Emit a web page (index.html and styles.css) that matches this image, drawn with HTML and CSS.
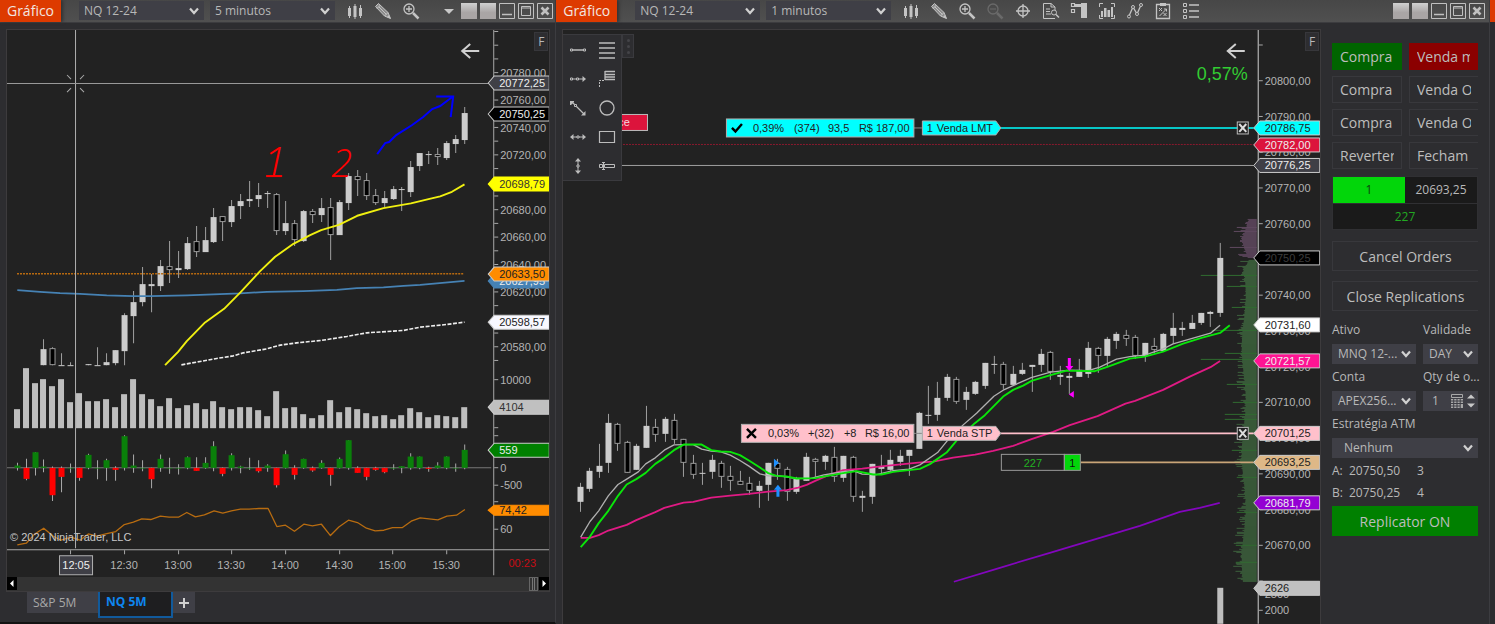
FILE: index.html
```html
<!DOCTYPE html>
<html lang="pt-BR">
<head>
<meta charset="utf-8">
<title>Gráfico NQ 12-24</title>
<link rel="stylesheet" href="styles.css">
</head>
<body>
<svg class="defs" aria-hidden="true">
  <symbol id="chev" viewBox="0 0 10 8"><path d="M1 1.500L5 6L9 1.500" fill="none" stroke="currentColor" stroke-width="2.200"/></symbol>
  <symbol id="bars" viewBox="0 0 18 18"><path d="M3.500 4v12M9 2v15M14.500 3v13" stroke="currentColor" fill="none"/><path d="M2 6h3v8H2zM7.500 4h3v11h-3zM13 6h3v8h-3z" fill="currentColor"/></symbol>
  <symbol id="pencil" viewBox="0 0 18 18"><path d="M1.500 4.500L4.500 1.500L14 10.500L16.500 16.500L10.500 14z" fill="#8c8c8c" stroke="currentColor"/><path d="M3 6.500L6.500 3M5 5l7.500 7.500M10.500 14l3.500-3.500" stroke="currentColor" fill="none"/><path d="M13 15l2-2 1.500 3.500z" fill="currentColor"/></symbol>
  <symbol id="zoomin" viewBox="0 0 18 18"><circle cx="7" cy="7" r="5" fill="none" stroke="currentColor" stroke-width="1.300"/><path d="M4 7h6M7 4v6" stroke="currentColor" stroke-width="1.300"/><path d="M11 11l5.500 5.500" stroke="currentColor" stroke-width="2.500"/></symbol>
  <symbol id="zoomout" viewBox="0 0 18 18"><circle cx="7" cy="7" r="5" fill="none" stroke="currentColor" stroke-width="1.300"/><path d="M4 7h6" stroke="currentColor"/><path d="M11 11l5.500 5.500" stroke="currentColor" stroke-width="2.500"/></symbol>
  <symbol id="target" viewBox="0 0 18 18"><circle cx="9" cy="9" r="5" fill="none" stroke="currentColor" stroke-width="1.300"/><path d="M2 9h14M9 2v14" stroke="currentColor" stroke-width="1.300"/></symbol>
  <symbol id="docsearch" viewBox="0 0 18 18"><path d="M13 16.500H1.500v-15H9L13 5v3M9 1.500V5h4" fill="none" stroke="currentColor"/><path d="M4 7h4M4 9.500h4M4 12h5" stroke="currentColor"/><circle cx="12" cy="10.500" r="2.500" fill="none" stroke="currentColor"/><path d="M14 12.500l3 3" stroke="currentColor" stroke-width="1.500"/></symbol>
  <symbol id="trader" viewBox="0 0 18 18"><path d="M11 1h6v15h-6z" fill="currentColor"/><path d="M1.500 1.500h3v3h-3zM1.500 7.500h3v3h-3zM5 3h6" fill="none" stroke="currentColor" stroke-width="1.200"/><path d="M5 2h6v3H5z" fill="currentColor"/></symbol>
  <symbol id="data" viewBox="0 0 18 18"><path d="M1.500 5V1.500H5M13 1.500h3.500V5M16.500 13v3.500H13M5 16.500H1.500V13" fill="none" stroke="currentColor"/><path d="M3 9h2v6H3zM6 6h2.500v9H6zM9.500 8H12v7H9.500zM13 5h2v10h-2z" fill="currentColor"/></symbol>
  <symbol id="nodes" viewBox="0 0 18 18"><path d="M3 14L7 5L11 12L15 3" fill="none" stroke="currentColor" stroke-width="1.300"/><g fill="#4a4a4a" stroke="currentColor"><circle cx="3" cy="14.500" r="1.500"/><circle cx="7" cy="5" r="1.500"/><circle cx="11" cy="12" r="1.500"/><circle cx="15" cy="3" r="1.500"/></g></symbol>
  <symbol id="clip" viewBox="0 0 18 18"><path d="M2.500 2.500h13v14h-13z" fill="none" stroke="currentColor" stroke-width="1.300"/><path d="M6 1h6v3H6z" fill="currentColor"/><path d="M5 6l3 3M8 6L5 9M9.500 11l3 3M12.500 11l-3 3M5.500 14l7-7M10 7h2.500v2.500" fill="none" stroke="currentColor"/></symbol>
  <symbol id="list" viewBox="0 0 18 18"><path d="M1.500 1.500h3v3h-3zM1.500 7.500h3v3h-3zM1.500 13.500h3v3h-3z" fill="none" stroke="currentColor"/><path d="M7 3h10M7 9h10M7 15h10" stroke="currentColor" stroke-width="1.300"/></symbol>
  <symbol id="win-min" viewBox="0 0 16 16"><path d="M.5.5h15v15H.5z" fill="none" stroke="currentColor"/><path d="M3 11.500h10" stroke="currentColor" stroke-width="1.500"/></symbol>
  <symbol id="win-max" viewBox="0 0 16 16"><path d="M.5.5h15v15H.5zM3.500 3.500h9v9h-9zM3.500 5h9" fill="none" stroke="currentColor"/></symbol>
  <symbol id="win-close" viewBox="0 0 16 16"><path d="M.5.5h15v15H.5z" fill="none" stroke="currentColor"/><path d="M4.500 4.500l7 7M11.500 4.500l-7 7" stroke="currentColor" stroke-width="2.600"/></symbol>
</svg>

<main class="desk">
  <section class="win win-left">
    <header class="bar">
      <h1 class="title">Gráfico</h1>
      <div class="picks">
        <label class="pick"><select aria-label="Instrumento"><option>NQ 12-24</option></select><svg><use href="#chev"/></svg></label>
        <label class="pick"><select aria-label="Intervalo"><option>5 minutos</option></select><svg><use href="#chev"/></svg></label>
      </div>
      <nav class="tools">
        <button aria-label="Estilo"><svg><use href="#bars"/></svg></button>
        <button aria-label="Desenho"><svg><use href="#pencil"/></svg></button>
        <button aria-label="Ampliar"><svg><use href="#zoomin"/></svg></button>
      </nav>
      <div class="wctl">
        <button class="caret" aria-label="Mais"></button>
        <button class="swatch" aria-label="Vínculo de instrumento"></button>
        <button class="swatch" aria-label="Vínculo de intervalo"></button>
        <button aria-label="Minimizar"><svg><use href="#win-min"/></svg></button>
        <button aria-label="Maximizar"><svg><use href="#win-max"/></svg></button>
        <button aria-label="Fechar"><svg><use href="#win-close"/></svg></button>
      </div>
    </header>
    <div class="frame">
      <svg id="chart5" class="chart" viewBox="7 30 542 547" role="img" aria-label="NQ 12-24, 5 minutos"></svg>
      <button class="fix">F</button>
      <div class="scroll">
        <button aria-label="Rolar para a esquerda"><svg viewBox="0 0 10 13"><path d="M6.500 3v7L3 6.500z" fill="#fff"/></svg></button>
        <span class="thumb"></span>
        <button aria-label="Rolar para a direita"><svg viewBox="0 0 10 13"><path d="M3.500 3v7L7 6.500z" fill="#fff"/></svg></button>
      </div>
    </div>
    <nav class="tabs">
      <button class="tab">S&amp;P 5M</button>
      <button class="tab on">NQ 5M</button>
      <button class="tab plus" aria-label="Nova aba"><svg viewBox="0 0 12 12"><path d="M6 1v10M1 6h10" stroke="#d0d0d0" stroke-width="2"/></svg></button>
    </nav>
  </section>

  <section class="win win-right">
    <header class="bar">
      <h1 class="title">Gráfico</h1>
      <div class="picks">
        <label class="pick"><select aria-label="Instrumento"><option>NQ 12-24</option></select><svg><use href="#chev"/></svg></label>
        <label class="pick"><select aria-label="Intervalo"><option>1 minutos</option></select><svg><use href="#chev"/></svg></label>
      </div>
      <nav class="tools">
        <button aria-label="Estilo"><svg><use href="#bars"/></svg></button>
        <button aria-label="Desenho"><svg><use href="#pencil"/></svg></button>
        <button aria-label="Ampliar"><svg><use href="#zoomin"/></svg></button>
        <button aria-label="Reduzir" disabled><svg><use href="#zoomout"/></svg></button>
        <button aria-label="Cursor"><svg><use href="#target"/></svg></button>
        <button aria-label="Caixa de dados"><svg><use href="#docsearch"/></svg></button>
        <button aria-label="Chart Trader"><svg><use href="#trader"/></svg></button>
        <button aria-label="Séries de dados"><svg><use href="#data"/></svg></button>
        <button aria-label="Indicadores"><svg><use href="#nodes"/></svg></button>
        <button aria-label="Estratégias"><svg><use href="#clip"/></svg></button>
        <button aria-label="Propriedades"><svg><use href="#list"/></svg></button>
      </nav>
      <div class="wctl">
        <button class="swatch" aria-label="Vínculo de instrumento"></button>
        <button class="swatch" aria-label="Vínculo de intervalo"></button>
        <button aria-label="Minimizar"><svg><use href="#win-min"/></svg></button>
        <button aria-label="Maximizar"><svg><use href="#win-max"/></svg></button>
        <button aria-label="Fechar"><svg><use href="#win-close"/></svg></button>
      </div>
    </header>
    <div class="body">
      <div class="frame">
        <svg id="chart1" class="chart" viewBox="563 30 757 594" role="img" aria-label="NQ 12-24, 1 minutos"></svg>
        <button class="fix">F</button>
        <div class="palette">
          <div class="palette-grid">
            <button aria-label="Linha"><svg viewBox="0 0 18 18"><path d="M3 9h12" stroke="currentColor" stroke-width="1.500"/><path d="M1.500 8h2v2h-2zM14.500 8h2v2h-2z" fill="none" stroke="currentColor"/></svg></button>
            <button aria-label="Níveis"><svg viewBox="0 0 18 18"><path d="M1 2h16M1 7h16M1 12h16M1 17h16" stroke="currentColor" stroke-width="1.300"/></svg></button>
            <button aria-label="Raio"><svg viewBox="0 0 18 18"><path d="M3 9h13" stroke="currentColor"/><path d="M1.500 8h2v2h-2zM7.500 8h2v2h-2z" fill="#2d2d30" stroke="currentColor"/><path d="M13.500 6l3.500 3-3.500 3z" fill="currentColor"/></svg></button>
            <button aria-label="Extensão"><svg viewBox="0 0 18 18"><path d="M7 1v9M7 1.500h10M7 4.500h10M7 7h10M7 9.500h10" stroke="currentColor" stroke-width="1.300"/><path d="M6 10.500H1.500V17" fill="none" stroke="currentColor" stroke-dasharray="2 1"/></svg></button>
            <button aria-label="Linha de seta"><svg viewBox="0 0 18 18"><path d="M3 3l12 12" stroke="currentColor" stroke-width="1.300"/><path d="M1 2h4v1L2 6H1zM16.500 12v4.500H12z" fill="currentColor"/><path d="M5.500 5.500h2v2h-2z" fill="#2d2d30" stroke="currentColor"/></svg></button>
            <button aria-label="Elipse"><svg viewBox="0 0 18 18"><circle cx="9" cy="9" r="7" fill="none" stroke="currentColor" stroke-width="1.300"/></svg></button>
            <button aria-label="Linha horizontal"><svg viewBox="0 0 18 18"><path d="M2 9h14" stroke="currentColor"/><path d="M4.500 6L1 9l3.500 3zM13.500 6L17 9l-3.500 3z" fill="currentColor"/><path d="M8 8h2v2H8z" fill="#2d2d30" stroke="currentColor"/></svg></button>
            <button aria-label="Retângulo"><svg viewBox="0 0 18 18"><path d="M1.500 3.500h15v11h-15z" fill="none" stroke="currentColor" stroke-width="1.200"/></svg></button>
            <button aria-label="Linha vertical"><svg viewBox="0 0 18 18"><path d="M9 2v14" stroke="currentColor"/><path d="M6 4.500L9 1l3 3.500zM6 13.500L9 17l3-3.500z" fill="currentColor"/><path d="M8 8h2v2H8z" fill="#2d2d30" stroke="currentColor"/></svg></button>
            <button aria-label="Régua"><svg viewBox="0 0 18 18"><path d="M1.500 7.500h3v3h-3zM6.500 7.500h10v3h-10z" fill="none" stroke="currentColor"/><path d="M4 5.500h3M5.500 5.500v7M4 12.500h3" stroke="currentColor" fill="none"/></svg></button>
          </div>
          <span class="grip"><i></i><i></i><i></i></span>
        </div>
      </div>

      <aside class="trader">
        <div class="orders">
          <button class="btn buy"><span>Compra</span></button><button class="btn sell"><span>Venda m</span></button>
          <button class="btn"><span>Compra</span></button><button class="btn cut"><span>Venda O</span></button>
          <button class="btn"><span>Compra</span></button><button class="btn cut"><span>Venda O</span></button>
          <button class="btn"><span>Reverter</span></button><button class="btn cut"><span>Fecham</span></button>
        </div>
        <div class="position">
          <output class="qty">1</output><output class="avg">20693,25</output>
          <output class="pnl">227</output>
        </div>
        <div class="wide">
          <button class="btn big cut">Cancel Orders</button>
          <button class="btn big cut">Close Replications</button>
        </div>
        <form class="fields">
          <div class="field"><label for="ativo">Ativo</label>
            <span class="pick"><select id="ativo"><option>MNQ 12-...</option></select><svg><use href="#chev"/></svg></span></div>
          <div class="field"><label for="validade">Validade</label>
            <span class="pick"><select id="validade"><option>DAY</option></select><svg><use href="#chev"/></svg></span></div>
          <div class="field"><label for="conta">Conta</label>
            <span class="pick"><select id="conta"><option>APEX256...</option></select><svg><use href="#chev"/></svg></span></div>
          <div class="field"><label for="qty">Qty de o...</label>
            <span class="stepper"><input id="qty" type="text" value="1">
              <svg class="calc" viewBox="0 0 12 14"><path d="M.5.5h11v3H.5z" fill="none" stroke="currentColor"/><path d="M0 5h2.200v1.500H0zM3.200 5h2.300v1.500H3.200zM6.500 5h2.200v1.500H6.500zM9.700 5H12v1.500H9.700zM0 7.500h2.200V9H0zM3.200 7.500h2.300V9H3.200zM6.500 7.500h2.200V9H6.500zM9.700 7.500H12V9H9.700zM0 10h2.200v1.500H0zM3.200 10h2.300v1.500H3.200zM6.500 10h2.200v1.500H6.500zM9.700 10H12v4H9.700zM0 12.500h2.200V14H0zM3.200 12.500h2.300V14H3.200zM6.500 12.500h2.200V14H6.500z" fill="currentColor"/></svg>
              <svg class="spin" viewBox="0 0 8 14"><path d="M0 4.500L4 .5l4 4zM0 9.500l4 4 4-4z" fill="currentColor"/></svg></span></div>
          <div class="field full"><label for="atm">Estratégia ATM</label>
            <span class="pick indent"><select id="atm"><option>Nenhum</option></select><svg><use href="#chev"/></svg></span></div>
        </form>
        <dl class="quotes">
          <dt>A:</dt><dd>20750,50</dd><dd>3</dd>
          <dt>B:</dt><dd>20750,25</dd><dd>4</dd>
        </dl>
        <button class="btn big on">Replicator ON</button>
      </aside>
    </div>
  </section>
  <div class="next"></div>
</main>
<script src="charts.js"></script>
</body>
</html>
```
FILE: styles.css
```css
* { box-sizing: border-box; }
body { margin: 0; background: #2d2d30; color: #b8b8b8; font: 12px/16px "Open Sans", "Noto Sans", sans-serif; }
button, select, input { font: inherit; color: inherit; margin: 0; padding: 0; border: 0; border-radius: 0; background: none; }
.defs { position: absolute; width: 0; height: 0; }
.desk { display: flex; min-height: 100vh; align-items: stretch; }
.win { border-right: 1px solid #3c3c40; min-width: 0; background: #2d2d30; }
.win-left { flex: 556 1 0; border-bottom: 2px solid #121212; }
.win-right { flex: 934 1 0; }
.next { width: 5px; border-top: 22px solid #dc3c04; }

.bar { display: flex; align-items: center; height: 23px; background: linear-gradient(#474747, #505050); border-bottom: 1px solid #3c3c3f; }
.title { margin: 0; height: 22px; background: #dd3a00; color: #f2e6e0; font-size: 14px; line-height: 22px; font-weight: 400; width: 61px; box-shadow: 2px 0 3px #333; text-align: center; }
.picks { display: flex; gap: 6px; margin-left: 18px; }
.picks .pick { width: 125px; }
.pick { display: grid; height: 20px; background: #3f3f46; align-items: center; }
.pick select, .pick svg { grid-area: 1 / 1; }
.pick select { appearance: none; width: 100%; height: 20px; padding: 0 18px 0 6px; overflow: hidden; }
.pick svg { justify-self: end; width: 10px; height: 8px; margin-right: 5px; color: #d0d0d0; pointer-events: none; }
.picks .pick { height: 19px; margin-bottom: 1px; }
.picks select { height: 19px; padding-left: 5px; }
.tools { display: flex; gap: 10px; margin-left: 11px; margin-bottom: 1px; color: #c4c4c4; }
.tools button, .tools svg { display: block; width: 18px; height: 18px; }
.tools button:disabled { color: #6a6a6a; }
.wctl { display: flex; align-items: center; gap: 3px; margin-left: auto; padding-right: 3px; color: #c0c0c0; }
.win-left .wctl { padding-right: 2px; }
.win-right .wctl { padding-right: 4px; }
.wctl button, .wctl svg { display: block; width: 16px; height: 16px; }
.wctl .swatch { background: linear-gradient(#d0d0d0, #a9a5a5 60%); }
.wctl .caret { width: 0; height: 0; border: 5px solid transparent; border-top-color: #c8c8c8; border-bottom: 0; margin-right: 4px; }

.frame { position: relative; border: 1px solid #3d3b3d; background: #222; }
.win-left .frame { margin: 6px 5px 0 6px; }
.win-right .frame { flex: 1; min-width: 0; margin: 6px 0 0 6px; border-bottom: 0; }
.chart { display: block; width: 100%; height: auto; font-family: "Liberation Sans", Arial, sans-serif; font-size: 11px; }
.fix { position: absolute; top: 2px; right: 1px; width: 14px; height: 19px; background: #2d2d30; border: 1px solid #37373b; font-size: 12px; line-height: 16px; }
.body { display: flex; align-items: flex-start; }

.scroll { display: flex; height: 14px; background: #333; }
.scroll button, .scroll svg { display: block; width: 10px; height: 13px; background: #000; }
.thumb { margin-left: auto; width: 9px; margin-right: 1px; border: 1px solid #666; background: linear-gradient(90deg, #333 30%, #777 30% 45%, #333 45% 60%, #777 60% 75%, #333 75%); }
.tabs { display: flex; align-items: flex-start; padding-left: 27px; }
.tab { height: 21px; width: 71px; padding-left: 6px; background: #3f3f46; text-align: left; color: #a8a8a8; }
.tab.on { height: 26px; width: 75px; padding: 0 0 4px 6px; background: #1e1e20; border: 2px solid #115a9c; border-top: 0; color: #0e86f0; font-weight: 700; }
.tab.plus { width: 22px; padding: 0; }
.tab.plus svg { display: block; width: 12px; height: 12px; margin: 0 auto; }

.palette { position: absolute; left: 0; top: 4px; display: flex; align-items: flex-start; color: #bcbcbc; }
.palette-grid { display: grid; grid-template-columns: 29px 29px; grid-auto-rows: 29px; width: 59px; background: #2d2d30; border: 1px solid #3a3a3e; border-left: 0; }
.palette-grid button { display: grid; place-items: center; }
.palette-grid svg { width: 18px; height: 18px; }
.grip { display: grid; place-content: center; gap: 3px; width: 12px; height: 24px; background: #2d2d30; border: 1px solid #3a3a3e; }
.grip i { width: 3px; height: 3px; background: #444448; border-radius: 50%; }

.trader { flex: none; width: 168px; padding: 20px 11px 0; }
.orders { display: grid; grid-template-columns: 70px minmax(0, 1fr); gap: 6px 7px; }
.btn { border: 1px solid #38383c; height: 27px; padding: 0 7px; font-size: 14px; line-height: 26px; text-align: left; overflow: hidden; white-space: nowrap; color: #bdbdbd; }
.btn span { display: block; overflow: hidden; }
.btn.cut { border-right: 0; }
.btn.buy { background: #006400; border-color: #006400; }
.btn.sell { background: #8b0000; border-color: #8b0000; }
.position { display: grid; grid-template-columns: 72px minmax(0, 1fr); margin-top: 7px; background: #1a1a1a; border: 1px solid #303033; text-align: center; }
.position output { height: 26px; line-height: 26px; }
.position .qty { background: #02d60a; color: #104010; }
.position .pnl { grid-column: 1 / 3; border-top: 1px solid #303033; color: #22a822; }
.wide { display: grid; gap: 10px; margin-top: 11px; }
.btn.big { height: 30px; width: 100%; text-align: center; padding: 0; line-height: 29px; }
.btn.on { background: #008000; border-color: #008000; display: block; }
.fields { display: grid; grid-template-columns: 84px minmax(0, 1fr); gap: 5px 7px; margin-top: 11px; }
.field { display: grid; grid-template-columns: minmax(0, 1fr); gap: 6px; min-width: 0; }
.field label { white-space: nowrap; line-height: 16px; }
.field.full { grid-column: 1 / 3; }
.indent select { padding-left: 12px; }
.stepper { display: flex; align-items: center; height: 20px; background: #3f3f46; padding: 0 3px 0 9px; gap: 4px; }
.stepper input { width: 14px; flex: 1; min-width: 0; }
.calc { width: 12px; height: 14px; color: #a8a8a8; flex: none; }
.spin { width: 8px; height: 14px; color: #c8c8c8; flex: none; }
.quotes { display: grid; grid-template-columns: 17px 68px 1fr; row-gap: 6px; margin: 5px 0; }
.quotes dd { margin: 0; }
```
FILE: charts.js
```javascript
const NS = 'http://www.w3.org/2000/svg';

function el(parent, tag, attrs, text) {
  const node = document.createElementNS(NS, tag);
  for (const key in attrs) node.setAttribute(key, attrs[key]);
  if (text !== undefined) node.textContent = text;
  parent.appendChild(node);
  return node;
}
const line = (g, x1, y1, x2, y2, stroke, extra) => el(g, 'line', { x1, y1, x2, y2, stroke, ...extra });
const rect = (g, x, y, width, height, fill, extra) => el(g, 'rect', { x, y, width, height, fill, ...extra });
const label = (g, x, y, text, fill, extra) => el(g, 'text', { x, y, fill, ...extra }, text);

// Series are stored in thirds of a unit, relative to an origin.
function series(g, ox, oy, text, stroke, extra) {
  const points = text.trim().split(/\s+/).map(p => {
    const [x, y] = p.split(',').map(Number);
    return (ox + x / 3).toFixed(1) + ',' + (oy + y / 3).toFixed(1);
  }).join(' ');
  el(g, 'polyline', { points, fill: 'none', stroke, 'stroke-linejoin': 'round', ...extra });
}

// Each row: index high top bottom low [h = hollow]
function candles(g, x0, step, oy, width, text) {
  for (const row of text.trim().split('\n')) {
    const [i, hi, top, bot, lo, hollow] = row.trim().split(' ');
    const x = Math.round(x0 + step * i) + 0.5;
    const y = v => Math.round(oy + v / 3);
    line(g, x, y(hi), x, y(lo), '#a0a0a0');
    const h = Math.max(y(bot) - y(top), 1);
    if (hollow) rect(g, x - width / 2 + 0.5, y(top) + 0.5, width - 1, Math.max(h - 1, 2), '#000', { stroke: '#999' });
    else rect(g, x - width / 2, y(top), width, h, '#ccc');
  }
}

function tag(g, x, right, y, text, fill, color, border, half = 7) {
  el(g, 'path', { d: `M${x - 5} ${y}L${x + 1} ${y - half}H${right}V${y + half}H${x + 1}Z`, fill, stroke: border || '#ccc' });
  label(g, x + 6, y + 4, text, color);
}
function backArrow(g, x, y) {
  el(g, 'path', { d: `M${x + 18} ${y}H${x + 1}M${x + 9} ${y - 7}L${x + 1} ${y}L${x + 9} ${y + 7}`, fill: 'none', stroke: '#d0d0d0', 'stroke-width': 2 });
}

const axis = '#a8a8a8';

function drawFive() {
  const g = document.getElementById('chart5');
  const step = 8.95, x0 = 16.6;

  candles(g, x0, step, 130, 6, `3 626 657 705 705
4 650 653 705 705 h
5 669 705 705 705
6 695 705 705 705
8 702 702 705 705
9 650 705 705 705
10 669 696 705 705
11 660 661 700 705
12 549 556 664 705
13 484 516 558 640
14 412 463 516 529
15 432 463 467 546
16 391 408 467 482
17 333 409 419 458 h
18 362 415 419 443
19 321 338 416 419
20 288 334 367 380 h
21 290 331 367 367
22 233 262 335 340
23 257 259 277 333 h
24 210 228 275 292
25 192 213 227 266
26 153 206 212 230
27 158 194 206 232
28 182 189 193 233
29 189 192 304 316 h
30 213 280 304 315
31 270 280 330 348 h
32 240 244 333 336
33 237 244 256 280 h
34 205 234 256 277
35 205 232 316 391 h
36 211 216 314 314
37 130 137 218 241
38 121 139 150 198 h
39 130 151 199 209 h
40 176 195 218 224 h
41 182 204 218 230
42 168 178 206 209
43 170 178 181 242
44 94 111 186 200
45 69 69 109 124
46 62 72 75 101
47 55 72 80 104 h
48 34 40 84 89
49 14 28 41 69
50 -68 -51 31 41`);

  line(g, 17, 273.7, 464, 273.7, '#b86a10', { 'stroke-dasharray': '2 1', 'stroke-width': 1.5 });
  series(g, 0, 130, '52,480 120,485 180,489 240,491 320,496 400,498 450,498 560,496 660,492 720,490 800,485 910,483 1010,479 1070,474 1150,472 1210,467 1260,464 1393,452', '#4682b4', { 'stroke-width': 1.7 });
  series(g, 0, 130, '544,704 600,694 650,685 700,677 730,668 800,656 840,645 890,638 963,631 1040,619 1100,608 1210,601 1260,591 1340,583 1393,576', '#eee', { 'stroke-width': 1.6, 'stroke-dasharray': '4 1.5' });
  series(g, 0, 130, '495,705 534,665 560,633 615,577 672,536 721,487 760,445 780,423 825,380 880,341 930,315 963,300 1016,284 1071,257 1150,234 1232,220 1285,207 1320,199 1355,185 1393,163', '#f0f010', { 'stroke-width': 1.9 });

  const volume = [147, 25, 70, 58, 78, 58, 125, 99, 123, 123, 118, 142, 103, 58, 103, 118, 137, 113, 144, 135, 130, 147, 123, 142, 147, 140, 140, 150, 169, 92, 144, 140, 162, 174, 164, 121, 156, 140, 147, 159, 169, 166, 176, 164, 145, 157, 171, 166, 169, 171, 142];
  volume.forEach((v, i) => {
    const top = Math.round(360 + v / 3);
    rect(g, Math.round(x0 + step * i) - 3, top, 6, 428 - top, '#bebebe');
  });

  line(g, 7, 467.5, 491, 467.5, '#777');
  const delta = [[308, 316, 331], [296, 356, 360], [276, 276, 346], [298, 319, 336], [319, 405, 422], [319, 350, 396], [310, 323, 338], [323, 353, 362], [281, 284, 327], [300, 323, 357], [296, 300, 362], [318, 329, 362], [225, 228, 331], [283, 316, 338], [300, 323, 333], [323, 357, 384], [283, 296, 335], [293, 323, 341], [312, 323, 343], [289, 291, 327], [291, 332, 332], [291, 308, 326], [243, 258, 333], [322, 341, 348], [279, 285, 331], [317, 319, 339], [293, 323, 329], [300, 333, 337], [312, 316, 335], [323, 375, 382], [271, 282, 325], [315, 344, 358], [296, 296, 326], [319, 331, 335], [300, 308, 326], [323, 344, 377], [292, 296, 325], [240, 240, 329], [318, 338, 338], [323, 350, 360], [320, 329, 332], [323, 336, 339], [312, 323, 329], [318, 318, 339], [279, 289, 329], [289, 289, 327], [320, 326, 335], [306, 316, 325], [289, 289, 327], [310, 323, 335], [253, 269, 327]];
  delta.forEach(([hi, edge, lo], i) => {
    const x = Math.round(x0 + step * i) + 0.5;
    line(g, x, 360 + hi / 3, x, 360 + lo / 3, '#aaa');
    const up = edge <= 323;
    rect(g, x - 3, 360 + Math.min(edge, 323) / 3, 6, Math.max(Math.abs(edge - 323) / 3, 0.6), up ? '#0a800a' : '#f00');
  });

  series(g, 0, 360, '52,554 79,549 104,521 131,504 160,528 183,540 212,531 240,540 265,521 290,528 317,521 347,514 373,493 400,486 425,476 452,478 481,468 507,471 535,471 560,457 586,470 613,464 642,452 668,459 694,452 721,447 747,447 776,445 804,445 830,499 856,495 883,513 911,492 937,497 964,492 991,526 1016,500 1045,480 1072,487 1099,504 1125,512 1151,510 1177,502 1207,502 1233,483 1260,473 1313,479 1340,468 1369,465 1394,448', '#b86c10', { 'stroke-width': 1.3 });
  label(g, 10, 541, '© 2024 NinjaTrader, LLC', '#c8c8c8');

  line(g, 7, 549.5, 549, 549.5, axis);
  line(g, 493.5, 30, 493.5, 575, axis);
  for (let k = 0; k <= 24; k++) line(g, 494, 31.5 + k * 13.7, 498, 31.5 + k * 13.7, axis);
  [379.5, 427.5, 435.5, 467.5, 485, 501.5, 529].forEach(y => line(g, 494, y, 498, y, axis));
  [['20780,00', 72.5], ['20760,00', 100], ['20740,00', 127.5], ['20720,00', 155], ['20680,00', 210], ['20660,00', 237], ['20640,00', 264.5], ['20620,00', 292], ['20580,00', 346.5], ['10000', 379.5], ['0', 468], ['-500', 485], ['60', 529]]
    .forEach(([t, y]) => label(g, 500, y + 4, t, '#b4b4b4'));

  // crosshair
  line(g, 75.5, 30, 75.5, 548, '#b0b0b0');
  line(g, 7, 83.5, 488, 83.5, '#999');
  el(g, 'path', { d: 'M67 75l4 4M84 75l-4 4M67 92l4-4M84 92l-4-4', stroke: '#aaa' });

  tag(g, 493, 549, 83, '20772,25', '#3f3f46', '#eee');
  tag(g, 493, 549, 114, '20750,25', '#000', '#eee');
  tag(g, 493, 549, 184, '20698,79', '#ff0', '#333', '#ff0');
  tag(g, 493, 549, 281, '20627,95', '#4682b4', '#eee', '#4682b4');
  tag(g, 493, 549, 274, '20633,50', '#ff8c00', '#222');
  tag(g, 493, 549, 322, '20598,57', '#f8f8ff', '#222');
  tag(g, 493, 549, 407, '4104', '#c0c0c0', '#333');
  tag(g, 493, 549, 450, '559', '#008000', '#eee');
  tag(g, 493, 549, 510, '74,42', '#ff8c00', '#222', '#ff8c00', 5);

  [['12:30', 124], ['13:00', 178], ['13:30', 231], ['14:00', 285], ['14:30', 339], ['15:00', 392], ['15:30', 446]].forEach(([t, x]) => {
    line(g, x + 0.5, 550, x + 0.5, 554, axis);
    label(g, x, 569, t, '#b4b4b4', { 'text-anchor': 'middle' });
  });
  line(g, 70.5, 550, 70.5, 554, axis);
  rect(g, 59.5, 555.5, 33, 19, '#3f3f46', { stroke: '#b0b0b0' });
  label(g, 76, 569, '12:05', '#eee', { 'text-anchor': 'middle' });
  label(g, 522, 567, '00:23', '#c80c14', { 'text-anchor': 'middle' });

  // annotations
  const red = { 'font-family': '"Open Sans", sans-serif', 'font-style': 'italic', 'font-weight': 300 };
  label(g, 263, 177, '1', '#f00', { ...red, 'font-size': 42 });
  line(g, 266, 176, 282, 176, '#f00', { 'stroke-width': 2 });
  label(g, 331, 177, '2', '#f00', { ...red, 'font-size': 38 });
  el(g, 'path', { d: 'M377 154L385 143L389 142L396 135L412 125L423 117L432 109L440 106L452 97M436 96.500L453 96.500L450.500 117', fill: 'none', stroke: '#00f', 'stroke-width': 2 });
  backArrow(g, 461, 51);
}

function drawOne() {
  const g = document.getElementById('chart1');

  // volume profile
  const spikes = { 227: 20, 231: 23, 247: 27, 275: 56, 286: 30, 307: 25, 330: 45, 353: 32, 359: 56, 384: 30, 402: 24, 414: 32, 419: 32, 450: 25, 477: 20, 512: 20, 545: 21, 562: 21 };
  for (let y = 219; y < 582; y++) {
    if (y === 258 || y === 259) continue;
    const purple = y < 259;
    const base = purple ? 15 - Math.abs(y - 240) * 0.35 : y < 275 ? 8 + (y - 260) * 0.5 : 13 + 2 * Math.sin(y / 17);
    const jitter = Math.abs(Math.sin(y * 12.9898) * 43758.5453) % 1;
    const w = base + Math.pow(jitter, 4) * 9;
    rect(g, 1257 - w, y, w, 1, purple ? '#5a455a' : '#3c603c');
    if (spikes[y]) rect(g, 1257 - spikes[y], y, spikes[y], 1, purple ? '#604a60' : '#306c30');
  }
  const ax = 1258.5;
  line(g, ax, 30, ax, 624, axis, { 'stroke-width': 1.3 });
  for (let k = 0; k < 16; k++) line(g, 1259, 45 + k * 35.75, 1263, 45 + k * 35.75, axis);
  [['20800,00', 81], ['20790,00', 117], ['20780,00', 152.5], ['20770,00', 188], ['20760,00', 224], ['20740,00', 295.5], ['20730,00', 331], ['20720,00', 367], ['20710,00', 402.5], ['20700,00', 438.5], ['20690,00', 474], ['20680,00', 510], ['20670,00', 545.5], ['2500', 594], ['2000', 610.5]]
    .forEach(([t, y]) => label(g, 1265, y + 4, t, '#b4b4b4'));
  line(g, 1259, 610.5, 1263, 610.5, axis);

  candles(g, 579.8, 9.413, 380, 6, `0 309 322 367 396
1 263 272 326 335
2 192 258 276 293
3 101 128 248 278
4 130 131 191 213 h
5 184 187 278 280 h
6 192 198 269 269
7 78 138 204 204
8 116 141 165 187 h
9 112 116 162 185
10 102 119 181 193 h
11 176 178 248 290 h
12 225 250 284 298 h
13 250 280 282 315
14 225 240 276 296
15 243 248 292 323 h
16 258 287 304 332 h
17 272 302 316 316 h
18 290 310 333 346 h
19 304 318 333 383
20 248 248 315 362
21 237 250 268 299 h
22 262 268 335 362 h
23 290 298 337 341
24 219 231 302 304
25 234 237 244 290 h
26 226 229 246 270
27 201 230 292 307 h
28 229 229 293 305
29 229 230 352 367 h
30 334 349 353 396
31 252 253 350 372
32 225 262 266 286
33 210 241 269 274
34 210 228 246 259
35 209 210 228 287
36 96 100 208 208
37 18 104 107 131
38 6 55 105 122
39 -18 -8 53 62
40 -8 -4 67 71 h
41 20 35 61 91
42 3 6 42 46
43 -52 -51 17 26
44 -71 -48 -44 -19
45 -54 -47 14 28 h
46 -42 -19 15 15
47 -52 -30 -17 -14
48 -46 -45 -40 36
49 -92 -78 -46 -25
50 -86 -84 -23 0 h
51 -42 -16 -10 16
52 -20 -12 -5 42
53 -62 -30 -8 -8
54 -114 -96 -17 -5
55 -100 -97 -72 -22 h
56 -128 -124 -72 -38
57 -144 -138 -117 -94
58 -150 -135 -123 -102 h
59 -135 -128 -73 -62 h
60 -112 -110 -72 -53
61 -126 -102 -91 -82 h
62 -140 -138 -88 -84
63 -201 -156 -132 -108
64 -174 -155 -151 -132
65 -196 -171 -153 -153
66 -201 -200 -170 -166
67 -206 -203 -199 -160
68 -410 -366 -202 -190`);

  rect(g, 1217.5, 588, 6, 36, '#bebebe');
  series(g, 560, 380, '62,474 90,474 116,466 145,452 200,435 229,421 286,397 313,384 371,368 400,366 454,353 511,347 567,342 625,335 680,331 715,323 740,315 766,303 800,288 850,271 907,266 950,261 1000,256 1075,248 1120,245 1180,233 1246,224 1300,213 1360,198 1415,178 1480,156 1530,136 1613,109 1697,71 1726,63 1810,30 1890,-10 1952,-38 1981,-57', '#e01a84', { 'stroke-width': 1.8 });
  series(g, 560, 380, '62,472 90,425 116,393 145,348 174,314 200,298 235,276 257,252 286,234 313,211 342,195 371,194 400,194 425,208 454,214 483,216 511,226 540,242 567,259 600,282 625,288 660,288 700,295 750,296 792,285 850,275 879,272 907,283 950,284 1000,272 1047,268 1080,255 1133,218 1160,185 1210,135 1250,100 1302,49 1330,31 1360,17 1414,-7 1472,-23 1530,-29 1585,-28 1620,-38 1670,-62 1710,-70 1755,-74 1810,-93 1840,-108 1900,-125 1952,-140 1981,-164', '#b0b0b0', { 'stroke-width': 1.3 });
  series(g, 560, 380, '62,502 90,470 116,430 145,393 174,348 200,314 229,298 257,279 286,252 313,234 342,211 371,194 425,194 454,211 483,215 511,216 540,226 567,242 600,263 625,280 650,288 680,290 710,296 766,295 850,280 890,274 940,284 965,284 1000,276 1080,267 1110,253 1160,218 1190,182 1245,130 1275,106 1330,50 1360,30 1390,17 1415,3 1472,-14 1520,-28 1605,-26 1645,-40 1710,-64 1755,-70 1810,-85 1870,-109 1925,-126 1981,-141 2010,-164', '#0ae60a', { 'stroke-width': 1.9 });
  el(g, 'polyline', { points: '954,582 1000,568 1050,553 1100,538 1140,526 1180,512 1200,508 1220,503', fill: 'none', stroke: '#8306bd', 'stroke-width': 1.7 });

  // trade markers
  el(g, 'path', { d: 'M778 485l4 5h-2.500v7h-3v-7H774zM774 459l5 4-5 4.500z', fill: '#1e90ff' });
  el(g, 'path', { d: 'M1069.500 371l-4-5h2.500v-8h3v8h2.500zM1074 391v7l-5-3.500z', fill: '#f0f' });

  // price lines
  line(g, 563, 144.5, 1254, 144.5, '#8c1a2e', { 'stroke-dasharray': '2 1' });
  line(g, 563, 165.5, 1254, 165.5, '#a0a0a0');
  rect(g, 590.5, 114.5, 57, 16, '#dc143c', { stroke: '#bbb' });
  label(g, 630, 126, 'ce', '#f4d8dc', { 'text-anchor': 'end' });

  const order = (y, x, fill, parts, name) => {
    line(g, 914, y, 922, y, '#888');
    line(g, 1001, y, 1254, y, fill, { 'stroke-width': 1.6 });
    rect(g, x, y - 9, 914 - x, 18, fill, { stroke: '#b0b0b0' });
    parts.forEach(([px, t]) => label(g, px, y + 4, t, '#222'));
    el(g, 'path', { d: `M922.500 ${y - 7}H996L1001 ${y}L996 ${y + 7}H922.500Z`, fill, stroke: '#b0b0b0' });
    label(g, 927, y + 4, '1', '#222');
    label(g, 937, y + 4, name, '#222');
    rect(g, 1237.5, y - 6, 11, 12, '#222', { stroke: '#bbb' });
    el(g, 'path', { d: `M1239.500 ${y - 4}l7 8M1246.500 ${y - 4}l-7 8`, stroke: '#ddd', 'stroke-width': 2 });
  };
  order(128, 726.5, '#00ffff', [[753, '0,39%'], [794, '(374)'], [828, '93,5'], [859, 'R$ 187,00']], 'Venda LMT');
  order(433.5, 741.5, '#ffc0cb', [[768, '0,03%'], [808, '+(32)'], [844, '+8'], [865, 'R$ 16,00']], 'Venda STP');
  el(g, 'path', { d: 'M732 128l3.500 3.500L742 124', fill: 'none', stroke: '#000', 'stroke-width': 2.4 });
  el(g, 'path', { d: 'M747 429l9 9M756 429l-9 9', stroke: '#000', 'stroke-width': 2.4 });

  line(g, 1081, 462.5, 1254, 462.5, '#c9a578', { 'stroke-width': 1.6 });
  rect(g, 1001.5, 454.5, 63, 16, '#222', { stroke: '#999' });
  rect(g, 1064.5, 454.5, 16, 16, '#02d60a', { stroke: '#999' });
  label(g, 1033, 467, '227', '#22b022', { 'text-anchor': 'middle' });
  label(g, 1072.5, 467, '1', '#111', { 'text-anchor': 'middle' });

  const t = (y, text, fill, color, border) => tag(g, 1259, 1320, y, text, fill, color, border);
  t(128, '20786,75', '#0ff', '#222');
  t(145, '20782,00', '#dc143c', '#eee');
  t(165.5, '20776,25', '#3f3f46', '#eee');
  t(258, '20750,25', '#000', '#3c3c3c');
  t(325, '20731,60', '#fff', '#222');
  t(361, '20721,57', '#ff1493', '#eee');
  t(433.5, '20701,25', '#ffc0cb', '#222');
  t(462.5, '20693,25', '#deb887', '#222');
  t(503, '20681,79', '#9400d3', '#eee');
  t(588.5, '2626', '#c0c0c0', '#222');

  label(g, 1197, 80, '0,57%', '#32cd32', { 'font-size': 18 });
  backArrow(g, 1227, 51);
}

drawFive();
drawOne();
```
